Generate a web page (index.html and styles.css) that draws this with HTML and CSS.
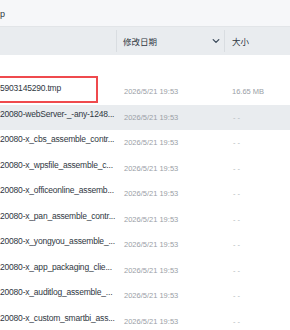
FILE: index.html
```html
<!DOCTYPE html>
<html lang="zh-CN">
<head>
<meta charset="utf-8">
<link rel="stylesheet" href="styles.css">
</head>
<body>
<div class="page">
  <div class="topbar"><span class="crumb">p</span></div>
  <div class="thead">
    <div class="th th-name"></div>
    <div class="th th-date"><span>修改日期</span>
      <svg class="chev" width="8" height="6" viewBox="0 0 8 6"><path d="M1.2 1.6 L4 4.4 L6.8 1.6" fill="none" stroke="#3b4a5a" stroke-width="1.3" stroke-linecap="round" stroke-linejoin="round"/></svg>
    </div>
    <div class="th th-size"><span>大小</span></div>
  </div>
  <div class="tbody">
    <div class="row first">
      <div class="name">5903145290.tmp</div>
      <div class="date">2026/5/21 19:53</div>
      <div class="size">16.65 MB</div>
      <div class="mark"></div>
    </div>
    <div class="row hl">
      <div class="name">20080-webServer-_-any-1248...</div>
      <div class="date">2026/5/21 19:53</div>
      <div class="size empty">- -</div>
    </div>
    <div class="row">
      <div class="name">20080-x_cbs_assemble_contr...</div>
      <div class="date">2026/5/21 19:53</div>
      <div class="size empty">- -</div>
    </div>
    <div class="row">
      <div class="name">20080-x_wpsfile_assemble_c...</div>
      <div class="date">2026/5/21 19:53</div>
      <div class="size empty">- -</div>
    </div>
    <div class="row">
      <div class="name">20080-x_officeonline_assemb...</div>
      <div class="date">2026/5/21 19:53</div>
      <div class="size empty">- -</div>
    </div>
    <div class="row">
      <div class="name">20080-x_pan_assemble_contr...</div>
      <div class="date">2026/5/21 19:53</div>
      <div class="size empty">- -</div>
    </div>
    <div class="row">
      <div class="name">20080-x_yongyou_assemble_...</div>
      <div class="date">2026/5/21 19:53</div>
      <div class="size empty">- -</div>
    </div>
    <div class="row">
      <div class="name">20080-x_app_packaging_clie...</div>
      <div class="date">2026/5/21 19:53</div>
      <div class="size empty">- -</div>
    </div>
    <div class="row">
      <div class="name">20080-x_auditlog_assemble_...</div>
      <div class="date">2026/5/21 19:53</div>
      <div class="size empty">- -</div>
    </div>
    <div class="row">
      <div class="name">20080-x_custom_smartbi_ass...</div>
      <div class="date">2026/5/21 19:53</div>
      <div class="size empty">- -</div>
    </div>
  </div>
</div>
</body>
</html>
```
FILE: styles.css
```css
* { box-sizing: border-box; }
html, body { margin: 0; padding: 0; }
body {
  width: 290px;
  height: 330px;
  overflow: hidden;
  background: #ffffff;
  font-family: "Liberation Sans", "Noto Sans CJK SC", sans-serif;
  color: #2f3742;
}
.page { width: 290px; height: 330px; overflow: hidden; }
.topbar {
  height: 27px;
  background: #f6f7f9;
  border-bottom: 1px solid #e2e5e8;
  display: flex;
  align-items: center;
  font-size: 9px;
  padding-top: 2px;
}
.crumb { margin-left: 0; color: #2f3742; }
.thead {
  height: 28px;
  background: #e9ecef;
  display: grid;
  grid-template-columns: 117px 108px 1fr;
  align-items: center;
  font-size: 8.5px;
  color: #2f3742;
}
.th { height: 22px; display: flex; align-items: center; border-right: 1px solid #d9dde1; }
.th-size { border-right: none; padding-left: 7px; }
.th-date { padding-left: 6px; padding-right: 4px; }
.chev { margin-left: auto; }
.tbody { padding-top: 24px; }
.row {
  position: relative;
  height: 25.5px;
  display: grid;
  grid-template-columns: 117px 108px 1fr;
  align-items: center;
  font-size: 7.5px;
}
.row.hl { background: #e9ecef; }
.name {
  font-size: 8.5px;
  letter-spacing: -0.2px;
  color: #2f3742;
  white-space: nowrap;
  overflow: hidden;
  margin-top: -7px;
}
.date { color: #9aa0a6; padding-left: 7px; }
.size { color: #9aa0a6; padding-left: 7px; }
.size.empty { color: #b3b8bd; padding-left: 8px; }
.mark {
  position: absolute;
  left: -4px;
  top: -3px;
  width: 102px;
  height: 27px;
  border: 2px solid #ef4a4d;
}
```
